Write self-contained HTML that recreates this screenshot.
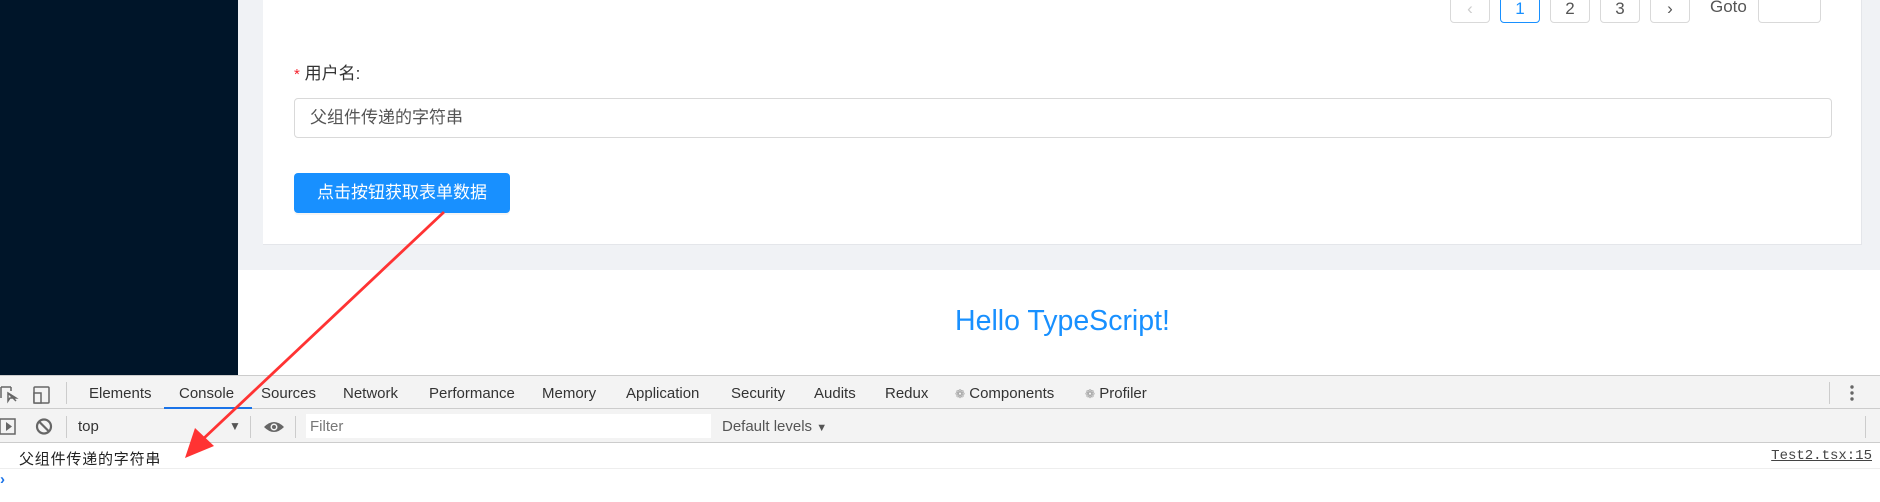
<!DOCTYPE html>
<html><head><meta charset="utf-8"><style>
*{margin:0;padding:0;box-sizing:border-box}
body{width:1880px;height:502px;overflow:hidden;position:relative;background:#fff;font-family:"Liberation Sans","Noto Sans CJK SC",sans-serif;}
.abs{position:absolute}
.pg{position:absolute;top:-17px;width:40px;height:40px;border:1px solid #d9d9d9;border-radius:4px;background:#fff;text-align:center;line-height:50px;font-size:17px;color:#555}
.tab{position:absolute;top:385px;font-size:15px;color:#333;white-space:nowrap}
</style></head><body>
<div class="abs" style="left:0;top:0;width:238px;height:375px;background:#001529"></div>
<div class="abs" style="left:238px;top:0;width:1642px;height:270px;background:#f0f2f5"></div>
<div class="abs" style="left:263px;top:0;width:1599px;height:245px;background:#fff;border-right:1px solid #e4e6ea;border-bottom:1px solid #e4e6ea"></div>
<div class="abs" style="left:238px;top:270px;width:1642px;height:105px;background:#fff"></div>

<div class="pg" style="left:1450px;color:#ccc">&lsaquo;</div>
<div class="pg" style="left:1500px;border-color:#1890ff;color:#1890ff">1</div>
<div class="pg" style="left:1550px">2</div>
<div class="pg" style="left:1600px">3</div>
<div class="pg" style="left:1650px">&rsaquo;</div>
<div class="abs" style="left:1710px;top:-3px;font-size:17px;color:#555">Goto</div>
<div class="pg" style="left:1758px;width:63px"></div>

<div class="abs" style="left:294px;top:59px;font-size:17px;color:#333"><span style="color:#f5222d;font-size:15px">*</span> 用户名:</div>
<div class="abs" style="left:294px;top:98px;width:1538px;height:40px;border:1px solid #d9d9d9;border-radius:4px;padding-left:15px;line-height:38px;font-size:17px;color:#555">父组件传递的字符串</div>
<div class="abs" style="left:294px;top:173px;width:216px;height:40px;background:#1890ff;border-radius:4px;color:#fff;font-size:17px;line-height:40px;text-align:center;box-shadow:0 2px 0 rgba(0,0,0,.04)">点击按钮获取表单数据</div>

<div class="abs" style="left:0;top:305px;width:2125px;text-align:center;font-size:28.5px;color:#1890ff">Hello TypeScript!</div>

<div class="abs" style="left:0;top:375px;width:1880px;height:34px;background:#f3f3f3;border-top:1px solid #ccc;border-bottom:1px solid #ccc"></div>
<div class="abs" style="left:0;top:409px;width:1880px;height:34px;background:#f3f3f3;border-bottom:1px solid #ccc"></div>
<svg class="abs" style="left:0;top:383px" width="60" height="22"><path d="M1 4h10M1 4v11M11 4v4M8 10l8 8M8 10v8l2-3h6z" stroke="#666" stroke-width="1.5" fill="none"/><rect x="34" y="4" width="15" height="16" rx="1" stroke="#666" stroke-width="1.5" fill="none"/><rect x="34" y="10" width="7" height="10" stroke="#666" stroke-width="1.5" fill="#f3f3f3"/></svg>
<div class="abs" style="left:66px;top:382px;width:1px;height:22px;background:#ccc"></div>
<div class="tab" style="left:89px">Elements</div>
<div class="tab" style="left:179px">Console</div>
<div class="abs" style="left:164px;top:407px;width:88px;height:2px;background:#1a73e8"></div>
<div class="tab" style="left:261px">Sources</div>
<div class="tab" style="left:343px">Network</div>
<div class="tab" style="left:429px">Performance</div>
<div class="tab" style="left:542px">Memory</div>
<div class="tab" style="left:626px">Application</div>
<div class="tab" style="left:731px">Security</div>
<div class="tab" style="left:814px">Audits</div>
<div class="tab" style="left:885px">Redux</div>
<div class="tab" style="left:955px"><span style="color:#999;font-size:12px">❁</span> Components</div>
<div class="tab" style="left:1085px"><span style="color:#999;font-size:12px">❁</span> Profiler</div>
<div class="abs" style="left:1829px;top:382px;width:1px;height:22px;background:#ccc"></div>
<svg class="abs" style="left:1849px;top:383px" width="6" height="20"><circle cx="3" cy="4" r="1.7" fill="#666"/><circle cx="3" cy="10" r="1.7" fill="#666"/><circle cx="3" cy="16" r="1.7" fill="#666"/></svg>

<svg class="abs" style="left:0;top:416px" width="60" height="22"><rect x="0" y="3" width="15" height="15" stroke="#666" stroke-width="1.5" fill="none"/><path d="M6 6l6 4.5-6 4.5z" fill="#666"/><circle cx="44" cy="10.5" r="7" stroke="#666" stroke-width="2.2" fill="none"/><path d="M39 5.5l10 10" stroke="#666" stroke-width="2.2"/></svg>
<div class="abs" style="left:66px;top:416px;width:1px;height:22px;background:#ccc"></div>
<div class="abs" style="left:78px;top:418px;font-size:15px;color:#333">top</div>
<div class="abs" style="left:229px;top:419px;font-size:12px;color:#555">▼</div>
<div class="abs" style="left:250px;top:416px;width:1px;height:22px;background:#ccc"></div>
<svg class="abs" style="left:263px;top:419px" width="22" height="16"><path d="M1 8Q11-2 21 8Q11 18 1 8z" fill="#666"/><circle cx="11" cy="8" r="3.5" fill="#f3f3f3"/><circle cx="11" cy="8" r="2" fill="#666"/></svg>
<div class="abs" style="left:295px;top:416px;width:1px;height:22px;background:#ccc"></div>
<div class="abs" style="left:306px;top:414px;width:405px;height:24px;background:#fff;padding-left:4px;line-height:26px;font-size:15px;color:#777">Filter</div>
<div class="abs" style="left:722px;top:418px;font-size:15px;color:#555">Default levels <span style="font-size:11px">▼</span></div>
<div class="abs" style="left:1865px;top:416px;width:1px;height:22px;background:#ccc"></div>

<div class="abs" style="left:0;top:468px;width:1880px;height:1px;background:#eee"></div>
<div class="abs" style="left:19px;top:448px;font-size:15px;color:#222;letter-spacing:0.8px;font-family:'Liberation Mono','Noto Sans CJK SC',monospace">父组件传递的字符串</div>
<div class="abs" style="right:8px;top:448px;font-size:14px;color:#444;text-decoration:underline;font-family:'Liberation Mono',monospace">Test2.tsx:15</div>
<div class="abs" style="left:0;top:471px;font-size:15px;color:#1a73e8;font-weight:bold">›</div>

<svg class="abs" style="left:0;top:0" width="1880" height="502"><path d="M444 212L202 440" stroke="#f33" stroke-width="2.8" fill="none"/><path d="M185 458L195 428L214 446z" fill="#f33"/></svg>
</body></html>
